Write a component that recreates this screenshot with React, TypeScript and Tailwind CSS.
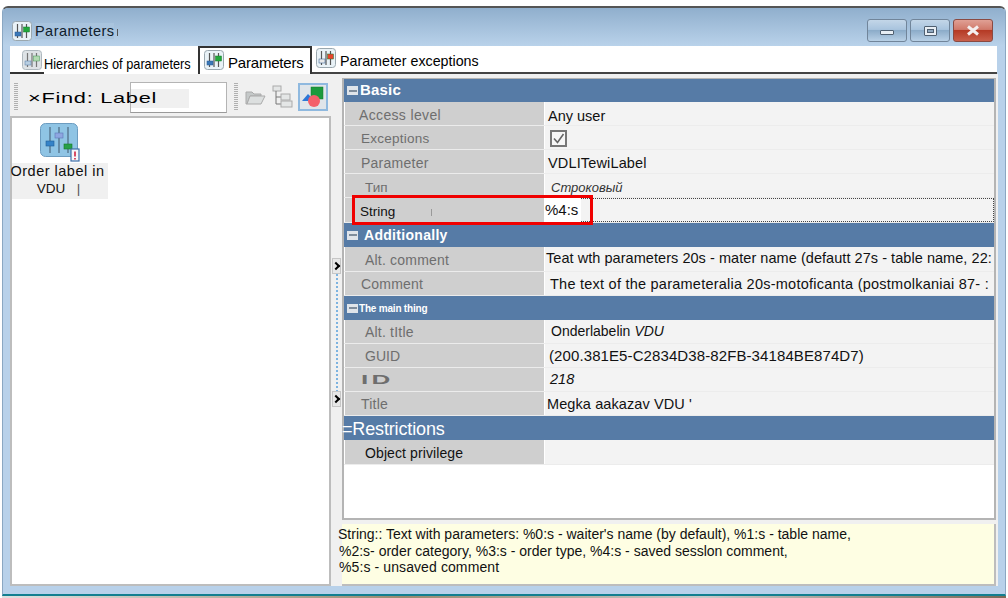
import type { ReactNode } from "react"

const sans = "font-['Liberation_Sans',Arial,sans-serif]"

function SliderIcon({ tint = "normal" }: { tint?: "normal" | "muted" | "red" }) {
  const fill = tint === "muted" ? "#d6dde0" : "#e9f2f7"
  const knobA = tint === "red" ? "#e9e9e9" : tint === "muted" ? "#a8c4dc" : "#3a78b8"
  const knobB = tint === "red" ? "#e8432c" : tint === "muted" ? "#9fd3a0" : "#21a83c"
  return (
    <svg width="20" height="20" viewBox="0 0 20 20" className="shrink-0">
      <rect x="0.5" y="0.5" width="19" height="19" rx="3" fill={fill} stroke="#9aa7ae" />
      <path d="M5.5 3v14M10 3v14M14.5 3v14" stroke="#555" strokeWidth="1.2" />
      <rect x="3" y="11" width="6" height="4" fill={knobA} stroke="#2a5a90" strokeWidth="0.5" />
      <rect x="11.5" y="6" width="6" height="5" fill={knobB} stroke="#177a2a" strokeWidth="0.5" />
    </svg>
  )
}

function LargeParamIcon() {
  return (
    <svg width="40" height="39" viewBox="0 0 40 39">
      <rect x="0.5" y="0.5" width="37" height="33" rx="5" fill="#8fc4e4" stroke="#6c9cc0" />
      <path d="M10 4v26M19 4v26M28 4v26" stroke="#5c7f98" strokeWidth="1.6" />
      <rect x="6" y="18" width="8" height="5" fill="#3583c8" stroke="#215f96" strokeWidth="0.6" />
      <rect x="15" y="10" width="8" height="5" fill="#8ea6e0" stroke="#5f78b8" strokeWidth="0.6" />
      <rect x="24" y="21" width="8" height="5" fill="#28a048" stroke="#177a2a" strokeWidth="0.6" />
      <rect x="31" y="26" width="8" height="12" fill="#f4f7fa" stroke="#3d6ea8" strokeWidth="1.2" />
      <path d="M35 28.5v5M35 35v1.5" stroke="#d02040" strokeWidth="1.6" />
    </svg>
  )
}

function Grip() {
  return (
    <div className="h-[28px] w-[4px] shrink-0 bg-[repeating-linear-gradient(to_bottom,#b0b0b0_0,#b0b0b0_1px,#f0f0f0_1px,#f0f0f0_2px)]" />
  )
}

function WindowButton({ kind }: { kind: "min" | "max" | "close" }) {
  const tone =
    kind === "close"
      ? "bg-[linear-gradient(to_bottom,#e0a095_0,#d0796a_45%,#b53a25_50%,#c9604c_100%)] border-[#8a4a42]"
      : "bg-[linear-gradient(to_bottom,#c3d6e8_0,#a9c4de_45%,#8cacc9_50%,#b8d0e6_100%)] border-[#71859a]"
  return (
    <div className={`flex h-[23px] w-[40px] items-center justify-center rounded-[3px] border ${tone}`}>
      {kind === "min" && <div className="mt-[3px] h-[5px] w-[14px] rounded-[1px] border border-[#4f5f70] bg-[#e8eef4]" />}
      {kind === "max" && (
        <div className="flex h-[10px] w-[13px] items-center justify-center rounded-[1px] border border-[#4f5f70] bg-[#e8eef4]">
          <div className="h-[4px] w-[7px] border border-[#4f5f70] bg-[#8fa8c0]" />
        </div>
      )}
      {kind === "close" && (
        <svg width="14" height="11" viewBox="0 0 14 11">
          <path d="M2 1.5l10 8M12 1.5l-10 8" stroke="#f4eeee" strokeWidth="3" />
        </svg>
      )}
    </div>
  )
}

function TitleBar() {
  return (
    <div className="flex h-[38px] shrink-0 items-start justify-between bg-[linear-gradient(to_bottom,#90afcd,#b9d2ea)] pl-[9px] pr-[12px] pt-[11px]">
      <div className="flex items-center gap-[3px] pt-[2px]">
        <SliderIcon />
        <span className={`${sans} bg-[#a9c4de] text-[14.5px] leading-[16px] tracking-[0.45px] text-[#10202c]`}>Parameters</span>
        <span className="mt-[3px] h-[7px] w-px bg-[#555]" />
      </div>
      <div className="flex gap-[3px]">
        <WindowButton kind="min" />
        <WindowButton kind="max" />
        <WindowButton kind="close" />
      </div>
    </div>
  )
}

function TabBar() {
  return (
    <div className="ml-[7px] mr-[8px] flex h-[28px] shrink-0 bg-white">
      <div className="flex w-[188px] items-end bg-[linear-gradient(#333,#333)] bg-[length:34px_2px] bg-left-bottom bg-no-repeat pl-[12px]">
        <div className="mb-[4px] opacity-80">
          <SliderIcon tint="muted" />
        </div>
        <span className={`${sans} mb-[1px] ml-[2px] inline-block origin-left scale-x-[0.85] whitespace-nowrap text-[15px] leading-[18px] text-black`}>
          Hierarchies of parameters
        </span>
      </div>
      <div className="flex w-[114px] items-start border-2 border-b-0 border-[#333] pl-[4px] pt-[2px]">
        <SliderIcon />
        <span className={`${sans} ml-[4px] mt-[4px] whitespace-nowrap text-[15px] leading-[18px] tracking-[-0.2px] text-black`}>Parameters</span>
      </div>
      <div className="flex flex-1 items-start border-b-2 border-[#444] pl-[4px] pt-[2px]">
        <SliderIcon tint="red" />
        <span className={`${sans} ml-[4px] mt-[4px] inline-block origin-left scale-x-[0.95] whitespace-nowrap text-[15px] leading-[18px] text-black`}>
          Parameter exceptions
        </span>
      </div>
    </div>
  )
}

function FindToolbar() {
  return (
    <div className="flex h-[38px] shrink-0 items-center pl-[4px]">
      <Grip />
      <div className="relative z-10 ml-[10px] w-[102px] shrink-0">
        <span className={`${sans} inline-block origin-left scale-x-[1.45] whitespace-nowrap text-[15px] tracking-[0.5px] text-black`}>
          ×Find: Label
        </span>
      </div>
      <div className="h-[31px] w-[97px] shrink-0 border border-[#b4b4b4] border-b-[#9a9a9a] bg-white py-[6px]">
        <div className="h-[19px] w-[58px] bg-[#f0f0f0]" />
      </div>
      <div className="ml-[7px]">
        <Grip />
      </div>
      <svg width="22" height="20" viewBox="0 0 22 20" className="ml-[6px] shrink-0">
        <path d="M2 5h6l2 2h7v2H6l-3 8H2z" fill="#c4c8c8" stroke="#aaa" />
        <path d="M6 9h15l-4 8H3z" fill="#dcdfdf" stroke="#aaa" />
      </svg>
      <svg width="22" height="24" viewBox="0 0 22 24" className="ml-[6px] shrink-0">
        <rect x="1" y="1" width="8" height="5" fill="#e4e6e6" stroke="#aaa" />
        <path d="M4 6v13h5M4 12h5" stroke="#777" fill="none" />
        <rect x="9" y="9" width="9" height="6" fill="#e4e6e6" stroke="#aaa" />
        <rect x="9" y="16" width="11" height="6" fill="#e4e6e6" stroke="#aaa" />
      </svg>
      <div className="ml-[4px] flex h-[28px] w-[30px] shrink-0 items-center justify-center border-2 border-[#8fb9df] bg-[#dfe5ea]">
        <svg width="24" height="22" viewBox="0 0 24 22">
          <rect x="10" y="1" width="12" height="12" fill="#1c9a3c" stroke="#157a2f" strokeWidth="0.5" />
          <path d="M1 15l6-7 7 7z" fill="#2c78d8" />
          <circle cx="13" cy="15" r="6" fill="#f4606a" />
        </svg>
      </div>
    </div>
  )
}

function LeftPanel() {
  return (
    <div className="flex w-[321px] shrink-0 flex-col">
      <FindToolbar />
      <div className="flex-1 border-2 border-[#bdbdbd] bg-white pt-[5px]">
        <div className="flex w-[96px] flex-col items-center">
          <LargeParamIcon />
          <div className={`${sans} mt-[1px] w-[96px] bg-[#f0f0f0] pb-[2px] text-center text-[14.5px] leading-[17px] tracking-[0.5px] text-[#101010]`}>
            <div className="-ml-[5px] whitespace-nowrap">Order label in</div>
            <div className="-ml-[3px] whitespace-pre text-[13.5px] tracking-normal">VDU  <span className="text-[#555]"> |</span></div>
          </div>
        </div>
      </div>
    </div>
  )
}

function Splitter() {
  return (
    <div className="flex w-[11px] shrink-0 flex-col items-center pt-[180px]">
      <div className="flex h-[16px] w-[9px] items-center justify-center border border-[#c6c6c6] bg-[#e8e8e8]">
        <span className="-ml-[2px] h-[6px] w-[6px] rotate-45 border-r-2 border-t-2 border-black" />
      </div>
      <div className="h-[117px] w-[2px] bg-[repeating-linear-gradient(to_bottom,#7db3e0_0,#7db3e0_2px,#f0f0f0_2px,#f0f0f0_4px)]" />
      <div className="flex h-[16px] w-[9px] items-center justify-center border border-[#c6c6c6] bg-[#e8e8e8]">
        <span className="-ml-[2px] h-[6px] w-[6px] rotate-45 border-r-2 border-t-2 border-black" />
      </div>
    </div>
  )
}

function Box({ checked }: { checked: boolean }) {
  return (
    <div className="flex h-[17px] w-[17px] items-center justify-center border-2 border-[#777] bg-[#f7f7f7]">
      {checked && (
        <svg width="13" height="13" viewBox="0 0 13 13">
          <path d="M2 6.5l3.5 4L11.5 2" stroke="#666" strokeWidth="1.6" fill="none" />
        </svg>
      )}
    </div>
  )
}

function GroupHeader({ children, size, h = "h-[24px]", pad = "pl-[3px]", minus = true }: {
  children: ReactNode
  size: string
  h?: string
  pad?: string
  minus?: boolean
}) {
  return (
    <div className={`flex ${h} items-center bg-[#567ba6] ${pad}`}>
      {minus && (
        <div className="flex h-[9px] w-[11px] items-center justify-center bg-[#dfe4ea]">
          <div className="h-[2px] w-[8px] bg-[#7f8d9c]" />
        </div>
      )}
      <span className={`${sans} whitespace-nowrap text-white ${size}`}>{children}</span>
    </div>
  )
}

function PropRow({ label, labelClass, value, valueClass, h = "h-[24px]" }: {
  label: ReactNode
  labelClass: string
  value?: ReactNode
  valueClass?: string
  h?: string
}) {
  return (
    <div className={`flex ${h} gap-[1px] border-b border-[#ececec]`}>
      <div className={`${sans} ml-[1px] flex w-[199px] shrink-0 items-center whitespace-nowrap bg-[#cfcfcf] text-[#6e6e6e] ${labelClass}`}>
        {label}
      </div>
      <div className={`${sans} flex flex-1 items-center overflow-hidden whitespace-nowrap bg-[#f3f3f3] text-[#111] ${valueClass ?? ""}`}>
        {value}
      </div>
    </div>
  )
}

function PropertyGrid() {
  return (
    <div className="relative flex-1 border-2 border-t border-[#b4b4b4] bg-white">
      <GroupHeader size="ml-[2px] text-[15px] font-bold tracking-[0.2px]" h="h-[23px]">Basic</GroupHeader>
      <PropRow label="Access level" labelClass="pl-[14px] pt-[4px] text-[14px] tracking-[0.35px]" value="Any user" valueClass="pl-[3px] pt-[6px] text-[14.5px]" />
      <PropRow label="Exceptions" labelClass="pl-[16px] pt-[4px] text-[13.5px] tracking-[0.25px]" value={<Box checked />} valueClass="pl-[5px] pt-[2px]" />
      <PropRow label="Parameter" labelClass="pl-[16px] pt-[4px] text-[14px] tracking-[0.25px]" value="VDLITewiLabel" valueClass="pl-[3px] pt-[5px] text-[14.5px] tracking-[0.15px]" />
      <PropRow label="Тип" labelClass="pl-[20px] pt-[6px] text-[13.5px]" value={<span className="italic">Строковый</span>} valueClass="pl-[6px] pt-[4px] text-[13px] text-[#333]" />
      <div className="flex h-[25px] gap-[1px] border-b border-[#ececec]">
        <div className={`${sans} ml-[1px] flex w-[199px] shrink-0 items-center bg-[#cfcfcf] pl-[15px] pt-[4px] text-[13.5px] text-[#111]`}>
          String
          <span className="ml-[36px] h-[7px] w-px bg-[#999]" />
        </div>
        <div className={`${sans} flex flex-1 items-center border border-dotted border-[#444] bg-[#f3f3f3] text-[15px] text-[#111]`}>
          <span className="-ml-[1px] flex h-[24px] w-[36px] items-center bg-white">%4:s</span>
        </div>
      </div>
      <GroupHeader size="ml-[6px] text-[14px] font-bold tracking-[0.3px]">Additionally</GroupHeader>
      <PropRow label="Alt. comment" labelClass="pl-[20px] pt-[2px] text-[14px] tracking-[0.2px]" value="Teat wth parameters 20s - mater name (defautt 27s - table name, 22:" valueClass="pl-[1px] text-[14.5px] tracking-[0.05px]" h="h-[25px]" />
      <PropRow label="Comment" labelClass="pl-[16px] pt-[2px] text-[14px] tracking-[0.2px]" value="The text of the parameteralia 20s-motoficanta (postmolkaniai 87- :" valueClass="pl-[5px] pt-[2px] text-[14.5px] tracking-[0.24px]" />
      <GroupHeader size="ml-[1px] text-[10px] font-bold tracking-[-0.2px]">The main thing</GroupHeader>
      <PropRow label="Alt. tItle" labelClass="pl-[20px] pt-[2px] text-[14px] tracking-[0.2px]" value={<>Onderlabelin <span className="ml-[4px] italic">VDU</span></>} valueClass="pl-[6px] text-[14px]" />
      <PropRow label="GUID" labelClass="pl-[20px] pt-[2px] text-[14px]" value="(200.381E5-C2834D38-82FB-34184BE874D7)" valueClass="pl-[4px] pt-[2px] text-[15px] tracking-[0.1px]" />
      <PropRow label={<span className="inline-block origin-left scale-x-[2] font-bold">I D</span>} labelClass="pl-[16px] text-[13px] tracking-[-1px]" value={<span className="italic">218</span>} valueClass="pl-[5px] text-[14.5px]" />
      <PropRow label="Title" labelClass="pl-[16px] pt-[2px] text-[14px] tracking-[0.2px]" value="Megka aakazav VDU '" valueClass="pl-[2px] pt-[2px] text-[14.5px] tracking-[0.1px]" />
      <GroupHeader size="-ml-[2px] pt-[2px] text-[18px] leading-[20px] tracking-[-0.15px]" minus={false} pad="pl-0">=Restrictions</GroupHeader>
      <PropRow label="Object privilege" labelClass="pl-[20px] pt-[2px] text-[14px] tracking-[0.1px] text-[#111]" h="h-[25px]" />
      <div className="pointer-events-none absolute left-[8px] top-[116px] h-[30px] w-[241px] border-[3px] border-[#f00000]" />
    </div>
  )
}

function HelpPanel() {
  return (
    <div className={`${sans} mt-[4px] h-[62px] shrink-0 border-b-2 border-r-2 border-[#bdbdbd] bg-[#fefee3] pt-[2px] text-[14px] leading-[16.5px] text-[#111]`}>
      <div className="-ml-[4px] whitespace-nowrap">String:: Text with parameters: %0:s - waiter's name (by default), %1:s - table name,</div>
      <div className="-ml-[3px] whitespace-nowrap">%2:s- order category, %3:s - order type, %4:s - saved sesslon comment,</div>
      <div className="-ml-[3px] whitespace-nowrap tracking-[0.1px]">%5:s - unsaved comment</div>
    </div>
  )
}

export default function App() {
  return (
    <div className="h-[598px] w-[1008px] overflow-hidden bg-white pl-[2px] pr-[2px] pt-[6px]">
      <div className="flex h-[590px] w-[1004px] flex-col overflow-hidden rounded-t-[6px] border-x border-b-2 border-t-2 border-x-[#8aa7c2] border-b-[#127f90] border-t-[#555] bg-[#b8d1ea]">
        <TitleBar />
        <TabBar />
        <div className="mx-[7px] flex h-[512px] shrink-0 bg-[#f0f0f0] pr-[2px] pt-[4px]">
          <LeftPanel />
          <Splitter />
          <div className="flex min-w-0 flex-1 flex-col">
            <PropertyGrid />
            <HelpPanel />
          </div>
        </div>
      </div>
      <div className="h-[2px] bg-[linear-gradient(to_right,#e0e0e0,#9a8a70_40%,#c8c8c8_70%,#7a6a58)]" />
    </div>
  )
}
